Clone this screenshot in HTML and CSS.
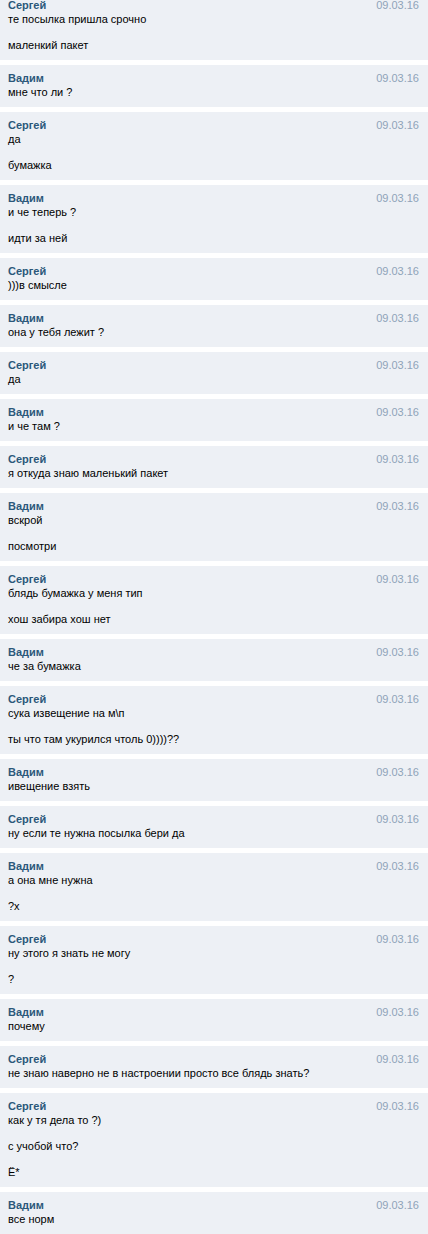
FILE: index.html
```html
<!DOCTYPE html>
<html lang="ru">
<head>
    <meta charset="UTF-8">
    <meta name="viewport" content="width=device-width, initial-scale=1.0">
    <title>Диалог</title>
    <link rel="stylesheet" href="styles.css">
</head>
<body>

    <div class="dialog" id="dialog"></div>

    <script>
        const messages = [
            { from: "Сергей", date: "09.03.16", lines: ["те посылка пришла срочно", "маленкий пакет"] },
            { from: "Вадим", date: "09.03.16", lines: ["мне что ли ?"] },
            { from: "Сергей", date: "09.03.16", lines: ["да", "бумажка"] },
            { from: "Вадим", date: "09.03.16", lines: ["и че теперь ?", "идти за ней"] },
            { from: "Сергей", date: "09.03.16", lines: [")))в смысле"] },
            { from: "Вадим", date: "09.03.16", lines: ["она у тебя лежит ?"] },
            { from: "Сергей", date: "09.03.16", lines: ["да"] },
            { from: "Вадим", date: "09.03.16", lines: ["и че там ?"] },
            { from: "Сергей", date: "09.03.16", lines: ["я откуда знаю маленький пакет"] },
            { from: "Вадим", date: "09.03.16", lines: ["вскрой", "посмотри"] },
            { from: "Сергей", date: "09.03.16", lines: ["блядь бумажка у меня тип", "хош забира хош нет"] },
            { from: "Вадим", date: "09.03.16", lines: ["че за бумажка"] },
            { from: "Сергей", date: "09.03.16", lines: ["сука извещение на м\\п", "ты что там укурился чтоль 0))))??"] },
            { from: "Вадим", date: "09.03.16", lines: ["ивещение взять"] },
            { from: "Сергей", date: "09.03.16", lines: ["ну если те нужна посылка бери да"] },
            { from: "Вадим", date: "09.03.16", lines: ["а она мне нужна", "?х"] },
            { from: "Сергей", date: "09.03.16", lines: ["ну этого я знать не могу", "?"] },
            { from: "Вадим", date: "09.03.16", lines: ["почему"] },
            { from: "Сергей", date: "09.03.16", lines: ["не знаю наверно не в настроении просто все блядь знать?"] },
            { from: "Сергей", date: "09.03.16", lines: ["как у тя дела то ?)", "с учобой что?", "Ё*"] },
            { from: "Вадим", date: "09.03.16", lines: ["все норм"] }
        ];

        messages.forEach((msg) => {
            let msgHtml = `
                <div class="msg">
                    <div class="msg-head">
                        <span class="author">${msg.from}</span>
                        <span class="date">${msg.date}</span>
                    </div>
                    <div class="text">${msg.lines.join('<br><br>')}</div>
                </div>`;

            document.getElementById('dialog').innerHTML += msgHtml;
        });
    </script>

</body>
</html>
```

FILE: styles.css
```css
body {
    font-family: 'Liberation Sans', Arial, sans-serif;
    font-size: 11px;
    margin: 0;
    padding: 0;
    background-color: #fff;
    color: #000;
}

.dialog {
    display: flex;
    flex-direction: column;
    gap: 5px;
    margin-top: -8px;
}

.msg {
    background-color: #edf0f5;
    padding: 5px 9px 8px 8px;
}

.msg-head {
    display: flex;
    justify-content: space-between;
    line-height: 16px;
}

.author {
    font-weight: bold;
    color: #2b587a;
}

.date {
    color: #8fa3b9;
}

.text {
    line-height: 13px;
}
```
